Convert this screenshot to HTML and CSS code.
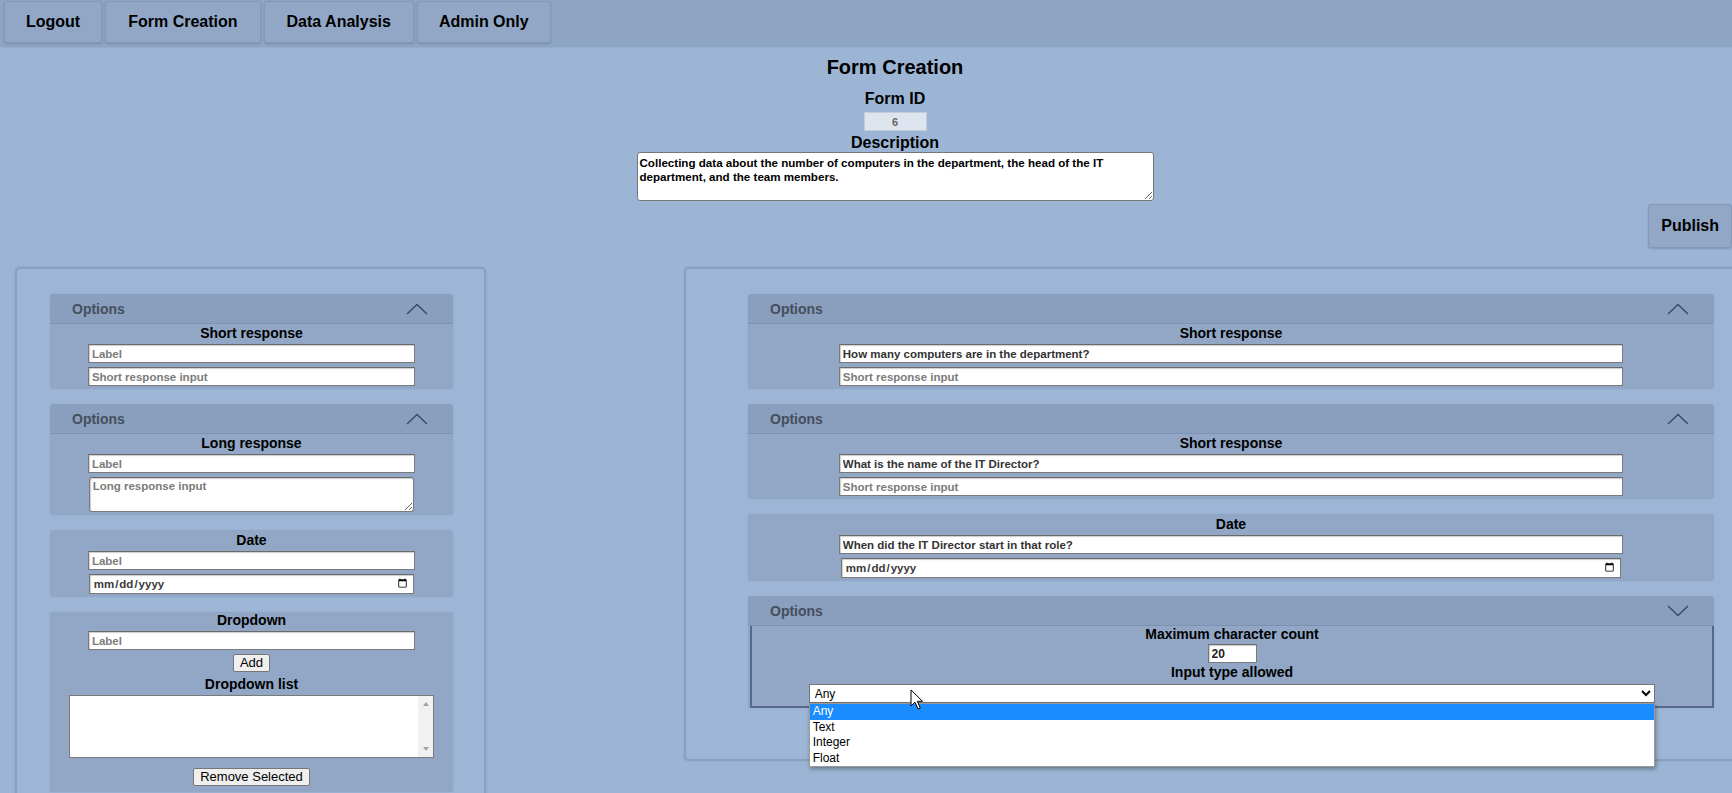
FILE: index.html
```html
<!DOCTYPE html>
<html lang="en">
<head>
<meta charset="utf-8">
<title>Form Creation</title>
<link rel="stylesheet" href="styles.css">
</head>
<body>
<div class="page">
  <nav class="nav">
    <button class="nav-btn">Logout</button>
    <button class="nav-btn">Form Creation</button>
    <button class="nav-btn">Data Analysis</button>
    <button class="nav-btn">Admin Only</button>
  </nav>

  <header class="head">
    <h1 class="title">Form Creation</h1>
    <div class="field-label">Form ID</div>
    <input class="form-id" value="6" readonly>
    <div class="field-label desc-label">Description</div>
    <textarea class="desc">Collecting data about the number of computers in the department, the head of the IT department, and the team members.</textarea>
  </header>

  <div class="publish-row"><button class="publish">Publish</button></div>

  <main class="panels">
    <section class="panel panel-left">
      <div class="card">
        <div class="card-head"><span>Options</span><svg class="chev" width="22" height="12" viewBox="0 0 22 12"><path d="M1 11 L11 1.5 L21 11"/></svg></div>
        <div class="card-body">
          <div class="card-title">Short response</div>
          <input class="inp" placeholder="Label">
          <input class="inp" placeholder="Short response input">
        </div>
      </div>
      <div class="card">
        <div class="card-head"><span>Options</span><svg class="chev" width="22" height="12" viewBox="0 0 22 12"><path d="M1 11 L11 1.5 L21 11"/></svg></div>
        <div class="card-body">
          <div class="card-title">Long response</div>
          <input class="inp" placeholder="Label">
          <textarea class="inp long" placeholder="Long response input"></textarea>
        </div>
      </div>
      <div class="card">
        <div class="card-body top">
          <div class="card-title">Date</div>
          <input class="inp" placeholder="Label">
          <input class="inp date" type="date">
        </div>
      </div>
      <div class="card">
        <div class="card-body top dd">
          <div class="card-title">Dropdown</div>
          <input class="inp" placeholder="Label">
          <button class="small-btn">Add</button>
          <div class="card-title">Dropdown list</div>
          <div class="listbox">
            <div class="list-area"></div>
            <div class="list-scroll"><span class="arr up"></span><span class="arr down"></span></div>
          </div>
          <button class="small-btn remove">Remove Selected</button>
        </div>
      </div>
    </section>

    <section class="panel panel-right">
      <div class="card">
        <div class="card-head"><span>Options</span><svg class="chev" width="22" height="12" viewBox="0 0 22 12"><path d="M1 11 L11 1.5 L21 11"/></svg></div>
        <div class="card-body">
          <div class="card-title">Short response</div>
          <input class="inp" value="How many computers are in the department?">
          <input class="inp" placeholder="Short response input">
        </div>
      </div>
      <div class="card">
        <div class="card-head"><span>Options</span><svg class="chev" width="22" height="12" viewBox="0 0 22 12"><path d="M1 11 L11 1.5 L21 11"/></svg></div>
        <div class="card-body">
          <div class="card-title">Short response</div>
          <input class="inp" value="What is the name of the IT Director?">
          <input class="inp" placeholder="Short response input">
        </div>
      </div>
      <div class="card">
        <div class="card-body top">
          <div class="card-title">Date</div>
          <input class="inp" value="When did the IT Director start in that role?">
          <input class="inp date" type="date">
        </div>
      </div>
      <div class="card">
        <div class="card-head"><span>Options</span><svg class="chev" width="22" height="12" viewBox="0 0 22 12"><path d="M1 1 L11 10.5 L21 1"/></svg></div>
        <div class="card-body opts">
          <div class="card-title">Maximum character count</div>
          <input class="inp count" value="20">
          <div class="card-title">Input type allowed</div>
          <div class="sel-wrap">
            <select class="sel"><option>Any</option><option>Text</option><option>Integer</option><option>Float</option></select>
            <div class="popup">
              <div class="opt active">Any</div>
              <div class="opt">Text</div>
              <div class="opt">Integer</div>
              <div class="opt">Float</div>
            </div>
          </div>
        </div>
      </div>
    </section>
  </main>
</div>
<svg class="cursor" width="14" height="22" viewBox="0 0 14 22"><path d="M1 1 L1 17 L5 13.2 L8 20 L10.3 19 L7.4 12.3 L12.5 12.3 Z"/></svg>
</body>
</html>
```

FILE: styles.css
```css
* { box-sizing: border-box; }
html, body { margin: 0; padding: 0; }
body {
  background: #9cb5d5;
  font-family: "Liberation Sans", Arial, sans-serif;
  color: #000;
  overflow: hidden;
  position: relative;
  min-height: 793px;
}
.page { width: 1790px; }

/* nav */
.nav {
  display: flex;
  gap: 3px;
  padding: 1px 4px 3px;
  background: #8ea5c3;
  box-shadow: 0 1px 2px rgba(70, 90, 120, 0.25);
}
.nav-btn {
  font: bold 16px/18px "Liberation Sans", Arial, sans-serif;
  color: #000;
  padding: 11px 22px;
  background: #91a7c5;
  border: 1px solid #8298b6;
  border-radius: 3px;
  box-shadow: 0 1px 2px rgba(70, 90, 120, 0.3);
}
.nav-btn:first-child { padding: 11px 21px; }
.nav-btn:last-child { padding: 11px 21px; }

/* header */
.head { display: flex; flex-direction: column; align-items: center; }
.title { margin: 9px 0 0; font-size: 20px; line-height: 24px; font-weight: bold; }
.field-label { font-weight: bold; font-size: 16px; line-height: 18px; margin-top: 11px; }
.desc-label { margin-top: 3px; }
.form-id {
  margin-top: 4px;
  width: 63px;
  height: 19px;
  background: #dfe5ee;
  border: 1px solid #c3cdda;
  text-align: center;
  font: bold 11px "Liberation Sans", Arial, sans-serif;
  color: #666;
  padding: 0;
}
.desc {
  display: block;
  width: 517px;
  height: 49px;
  font: bold 11.6px/14px "Liberation Sans", Arial, sans-serif;
  padding: 3px 2px 2px;
  border: 1px solid #767676;
  border-radius: 3px;
  background: #fff;
  color: #000;
  resize: both;
}

/* publish */
.publish-row { display: flex; justify-content: flex-end; padding-right: 58px; margin-top: 3px; }
.publish {
  font: bold 16px/18px "Liberation Sans", Arial, sans-serif;
  color: #000;
  height: 44px;
  padding: 0 12px;
  background: #91a7c5;
  border: 1px solid #8298b6;
  border-radius: 3px;
  box-shadow: 0 1px 2px rgba(70, 90, 120, 0.3);
}

/* panels */
.panels { display: flex; align-items: flex-start; margin-top: 19px; padding-left: 15px; gap: 198px; }
.panel {
  display: flex;
  flex-direction: column;
  gap: 15px;
  border: 2px solid #8aa0bf;
  border-radius: 5px;
  background: #9db6d6;
  box-shadow: 0 0 2px rgba(80, 100, 130, 0.3);
}
.panel-left { width: 471px; padding: 25px 31px 20px 33px; }
.panel-right { width: 1094px; padding: 25px 62px 51px 62px; }

/* cards */
.card {
  background: #91a7c5;
  border-radius: 4px;
  overflow: visible;
  box-shadow: 0 0 1px rgba(80, 100, 130, 0.35);
}
.card-head {
  height: 30px;
  display: flex;
  align-items: center;
  justify-content: space-between;
  padding: 0 25px 0 22px;
  background: #899fbd;
  border-bottom: 1px solid #7d93b1;
  border-radius: 4px 4px 0 0;
  font-weight: bold;
  font-size: 14px;
  color: #454f5d;
}
.chev path { fill: none; stroke: #3d4a5c; stroke-width: 1.4; }
.card-body {
  display: flex;
  flex-direction: column;
  align-items: center;
  gap: 4px;
  padding: 1px 0 3px;
}
.card-body.top { padding-top: 2px; }
.card-title { font-weight: bold; font-size: 14px; line-height: 17px; margin-bottom: -2px; }
.card-body.dd { gap: 4px; padding-top: 0; padding-bottom: 6px; }

.inp {
  display: block;
  width: 81.2%;
  height: 19px;
  margin: 0;
  border: 1px solid #7a7a7a;
  border-top-color: #6a6a6a;
  background: #fff;
  font: bold 11.5px "Liberation Sans", Arial, sans-serif;
  color: #333;
  padding: 1px 3px;
  box-shadow: inset 1px 1px 1px rgba(0, 0, 0, 0.2);
}
.inp::placeholder { color: #7b7b7b; }
.inp.long { height: 35px; width: 80.8%; resize: both; border-radius: 3px; padding-top: 2px; }
.inp.date { width: 80.8%; height: 20px; color: #3a3a3a; }
.inp.count { width: 49px; color: #222; font-size: 12px; }

.small-btn {
  font: 13px/14px "Liberation Sans", Arial, sans-serif;
  color: #000;
  height: 18px;
  padding: 1px 6px;
  background: #efefef;
  border: 1px solid #767676;
  border-radius: 2px;
}
.small-btn.remove { margin-top: 6px; }

.listbox {
  display: flex;
  width: 365px;
  height: 63px;
  background: #fff;
  border: 1px solid #7a7a7a;
}
.list-area { flex: 1; }
.list-scroll {
  width: 15px;
  background: #f1f1f1;
  display: flex;
  flex-direction: column;
  justify-content: space-between;
  align-items: center;
  padding: 6px 0;
}
.arr { width: 0; height: 0; border-left: 3.5px solid transparent; border-right: 3.5px solid transparent; }
.arr.up { border-bottom: 4px solid #a3a3a3; }
.arr.down { border-top: 4px solid #a3a3a3; }

/* options body */
.card-body.opts {
  gap: 1px;
  padding: 0 0 3px;
  margin: 0 0 0 2px;
  border: 2px solid #56698a;
  border-top: 0;
}
.card-body.opts .card-title { margin-bottom: 0; }
.card-body.opts .sel-wrap { margin-top: 2px; }
.sel-wrap { position: relative; width: 88.2%; }
.sel {
  display: block;
  width: 100%;
  height: 19px;
  font: 12px "Liberation Sans", Arial, sans-serif;
  color: #000;
  border: 1px solid #767676;
  border-radius: 0;
  background: #fff;
  padding: 0 0 0 1px;
}
.popup {
  position: absolute;
  left: 0;
  top: 100%;
  width: 100%;
  background: #fff;
  border: 1px solid #9a9a9a;
  box-shadow: 1px 2px 4px rgba(0, 0, 0, 0.35);
  z-index: 5;
}
.opt { height: 15.5px; line-height: 15.5px; font-size: 12px; padding-left: 3px; color: #000; }
.opt.active { background: #1a8cff; color: #fff; }

.cursor { position: absolute; left: 910px; top: 689px; z-index: 10; }
.cursor path { fill: #fff; stroke: #000; stroke-width: 1; stroke-linejoin: round; }
```
